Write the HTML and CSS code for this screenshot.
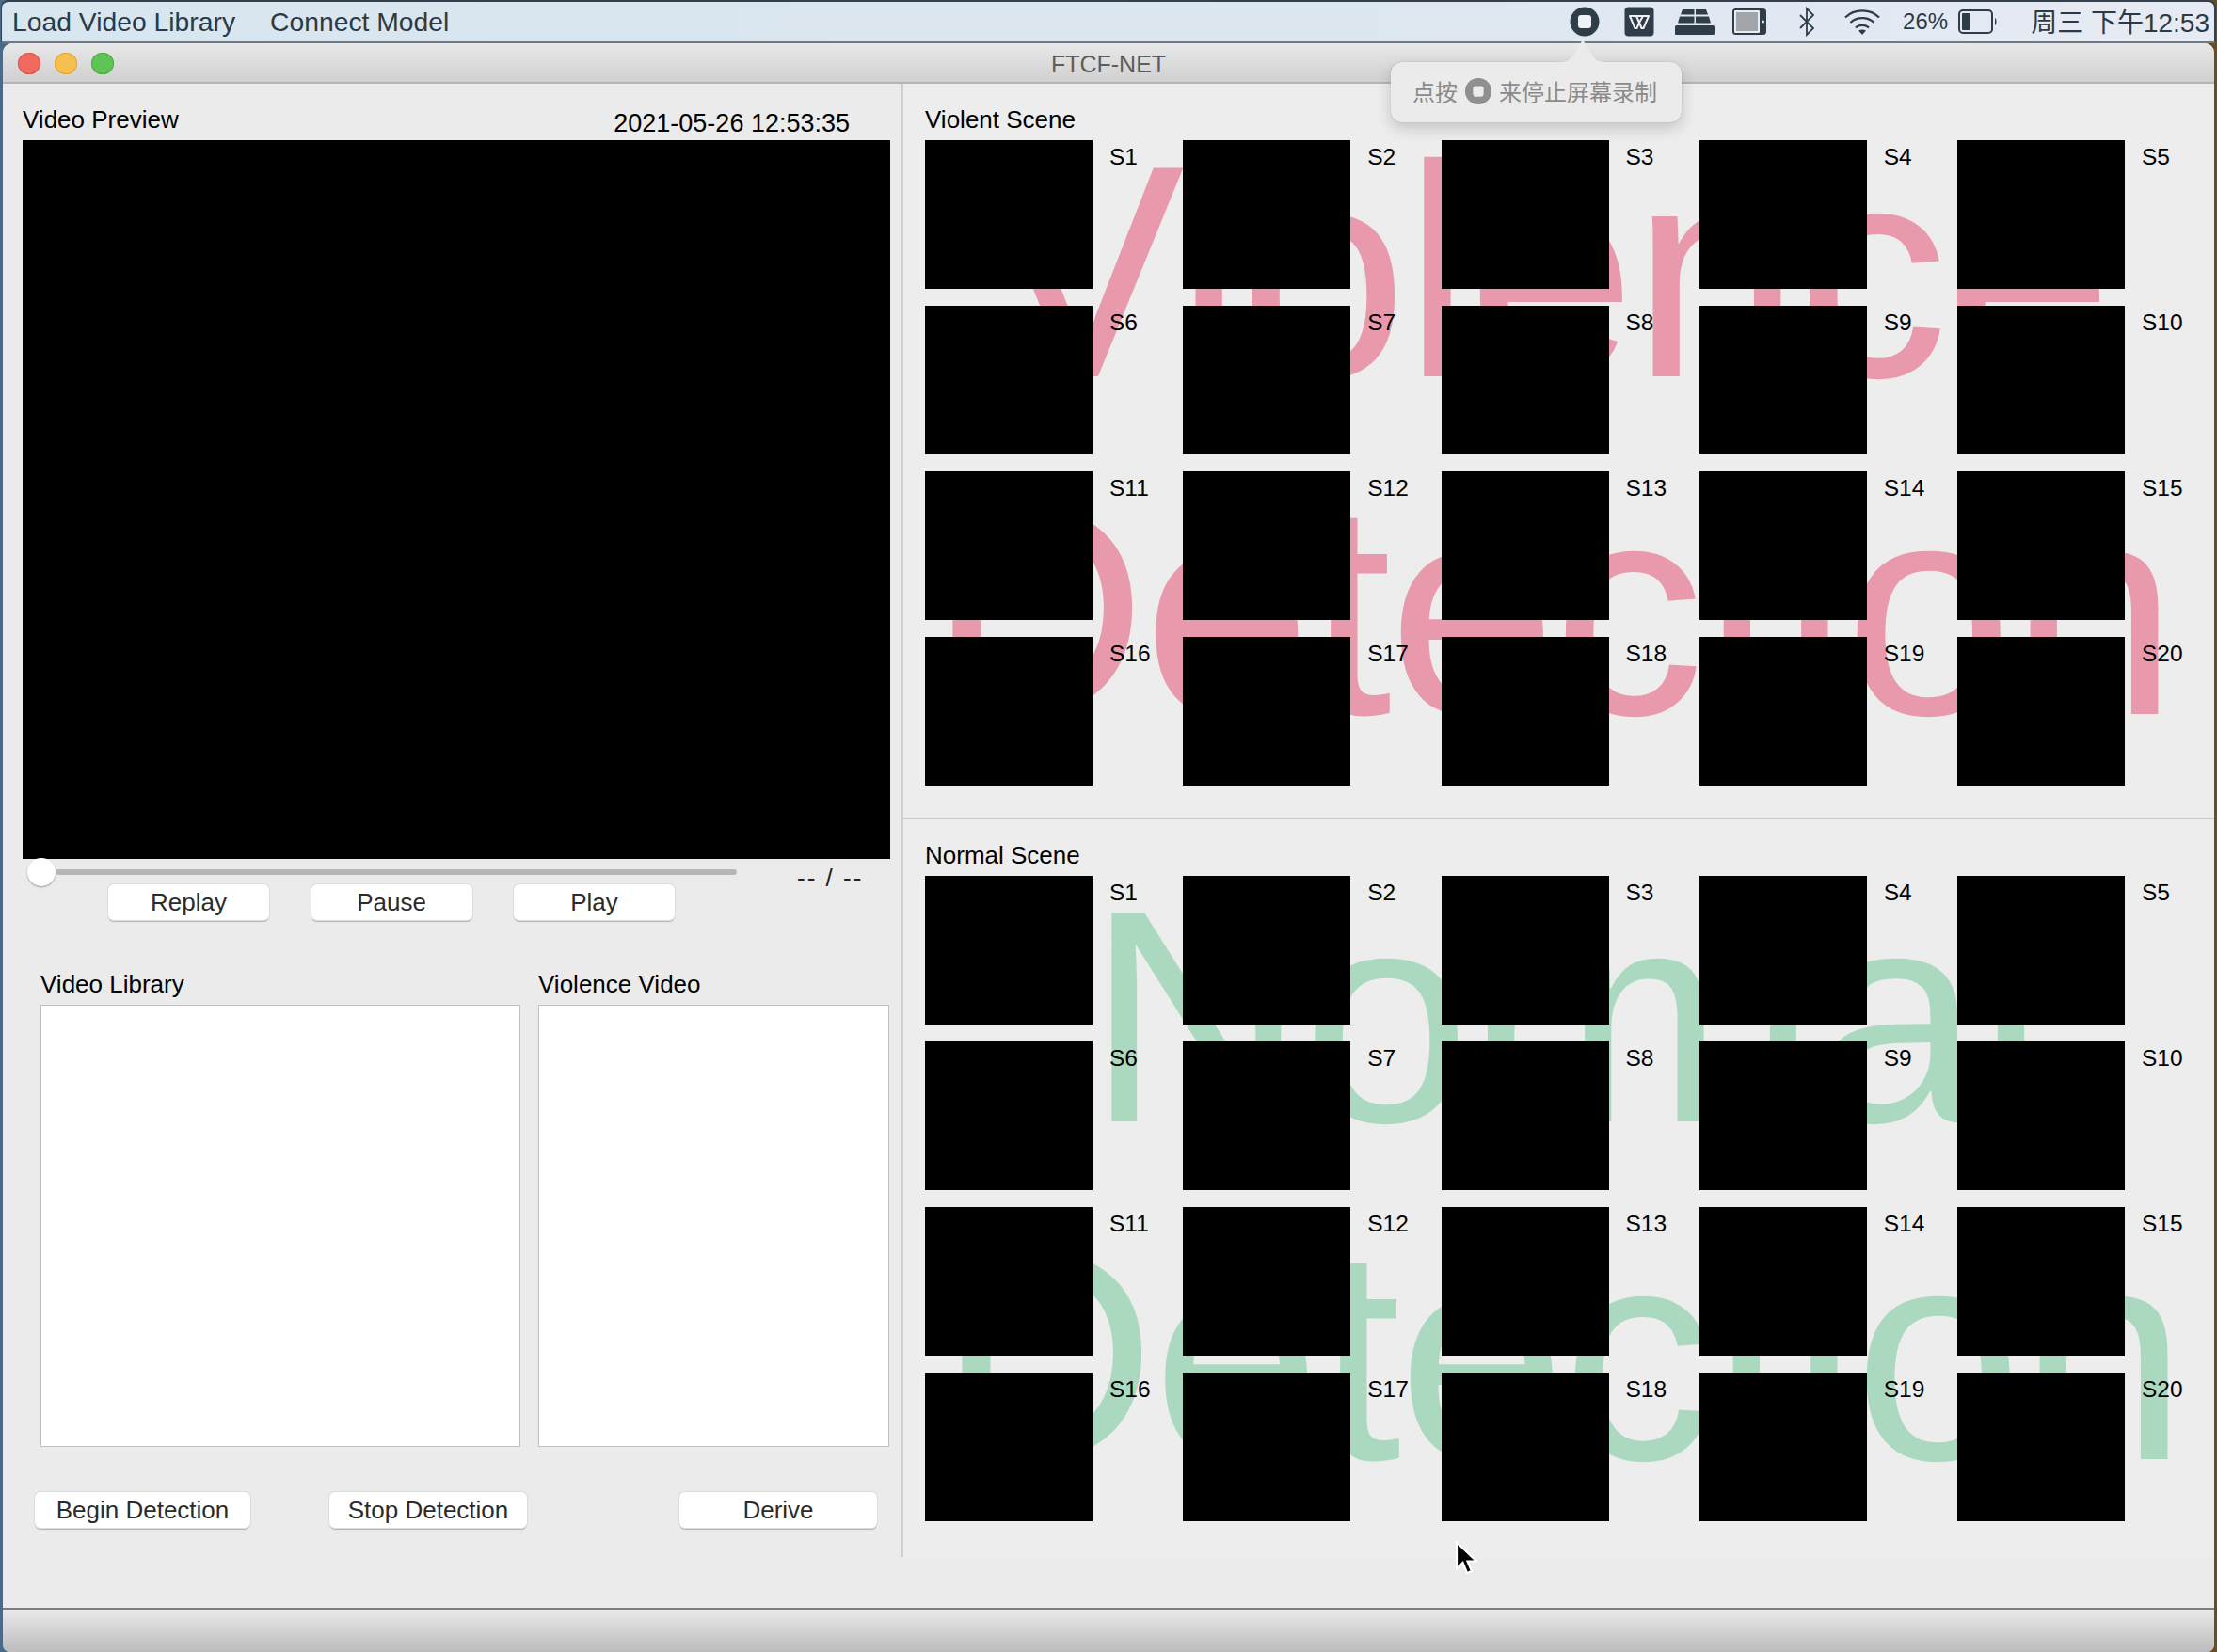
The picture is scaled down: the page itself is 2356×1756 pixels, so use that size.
FILE: index.html
```html
<!DOCTYPE html>
<html lang="en">
<head>
<meta charset="utf-8">
<title>FTCF-NET</title>
<link rel="stylesheet" href="styles.css">
</head>
<body>
<div class="screen">
  <header class="menubar">
    <nav class="menu"><span>Load Video Library</span><span>Connect Model</span></nav>
    <div class="status">
      <svg class="i-rec" viewBox="0 0 32 32"><circle cx="16" cy="16" r="15.500" fill="#2f3d49"/><rect x="9" y="9" width="14" height="14" rx="3" fill="#eef2f6"/></svg>
      <svg class="i-wps" viewBox="0 0 32 32"><rect x=".5" y=".5" width="31" height="31" rx="4" fill="#2f3d49"/><path d="M6 10h20l-5.500 13h-2L16 17l-2.500 6h-2z" fill="none" stroke="#eef2f6" stroke-width="2" stroke-linejoin="round"/><path d="M13 10l3 7 4-7" fill="none" stroke="#eef2f6" stroke-width="2"/></svg>
      <svg class="i-grid" viewBox="0 0 42 28"><path d="M8 1h12.500v5.500H6zM22 1h11l2 5.500H22zM5 8.500h15.500V15.500H3zM22 8.500h14l2 7H22zM1.500 18h39q1.500 0 1.500 1.500V27q0 1-1 1H1q-1 0-1-1v-7.500Q0 18 1.500 18z" fill="#2f3d49"/></svg>
      <svg class="i-pad" viewBox="0 0 36 28"><rect width="36" height="28" rx="3.500" fill="#2f3d49"/><rect x="2" y="2" width="27" height="24" rx="1" fill="#e9edf3"/><rect x="4" y="4" width="23" height="20" fill="#a2a5aa"/><circle cx="32.500" cy="14" r="1.500" fill="#eef2f6"/></svg>
      <svg class="i-bt" viewBox="0 0 18 32"><path d="M2 9l14 14-7 7V2l7 7L2 23" fill="none" stroke="#2f3d49" stroke-width="1.800"/></svg>
      <svg class="i-wifi" viewBox="0 0 40 28"><path d="M2 9.500C11.500 0 28.500 0 38 9.500M7.500 15C14 8.500 26 8.500 32.500 15M13 20.500c3.500-3.500 10.500-3.500 14 0" fill="none" stroke="#2f3d49" stroke-width="2.400"/><path d="M20 28l-4-4.500c2.200-1.400 5.800-1.400 8 0z" fill="#2f3d49"/></svg>
      <span class="pct">26%</span>
      <svg class="i-bat" viewBox="0 0 42 26"><rect x="1" y="1" width="35" height="24" rx="4" fill="none" stroke="#2f3d49" stroke-width="2"/><rect x="4" y="4" width="9" height="18" rx="1" fill="#2f3d49"/><path d="M39 9c2 1 2 7 0 8z" fill="#2f3d49"/></svg>
      <span class="clock">周三 下午12:53</span>
    </div>
  </header>

  <main class="window">
    <div class="titlebar">
      <div class="lights"><i class="light red"></i><i class="light yellow"></i><i class="light green"></i></div>
      <span class="wintitle">FTCF-NET</span>
    </div>

    <div class="body">
      <section class="left">
        <div class="preview-head"><span>Video Preview</span><span class="stamp">2021-05-26 12:53:35</span></div>
        <div class="video"></div>
        <div class="controls">
          <div class="transport">
            <div class="slider"><i class="thumb"></i></div>
            <div class="btn-row">
              <button class="btn b-replay">Replay</button>
              <button class="btn b-pause">Pause</button>
              <button class="btn b-play">Play</button>
            </div>
          </div>
          <span class="time">-- / --</span>
        </div>
        <div class="lists">
          <div class="list-col lib"><span class="list-label">Video Library</span><div class="listbox"></div></div>
          <div class="list-col vio"><span class="list-label">Violence Video</span><div class="listbox"></div></div>
        </div>
        <div class="actions">
          <button class="btn b-begin">Begin Detection</button>
          <button class="btn b-stop">Stop Detection</button>
          <button class="btn b-derive">Derive</button>
        </div>
      </section>

      <section class="right">
        <div class="scene violent">
          <div class="wm wm-v"><span class="wm1">Violence</span><span class="wm2">Detection</span></div>
          <h2 class="scene-title">Violent Scene</h2>
          <div class="grid" id="g1"></div>
        </div>
        <div class="scene normal">
          <div class="wm wm-n"><span class="wm1">Normal</span><span class="wm2">Detection</span></div>
          <h2 class="scene-title">Normal Scene</h2>
          <div class="grid" id="g2"></div>
        </div>
      </section>
    </div>

    <div class="statusbar"></div>
  </main>

  <div class="tip">
    <svg class="tip-arrow" viewBox="0 0 50 24"><path d="M0 24c8 0 12-2 16-9L25 0l9 15c4 7 8 9 16 9z" fill="#ebebeb"/></svg>
    <span>点按</span>
    <svg class="tip-rec" viewBox="0 0 32 32"><circle cx="16" cy="16" r="15" fill="#8f8f8f"/><rect x="10" y="10" width="12" height="12" rx="3" fill="#ebebeb"/></svg>
    <span>来停止屏幕录制</span>
  </div>

  <svg class="cursor" viewBox="0 0 24 36"><path d="M2 1.500v28l6.500-6.500 4.500 11 5-2-4.500-10.500H23z" fill="#000" stroke="#fff" stroke-width="2.200"/></svg>
</div>
<script src="app.js"></script>
</body>
</html>
```

FILE: styles.css
```css
* { box-sizing: border-box; }
html, body { margin: 0; padding: 0; background: #2a3038; }
body { font-family: "Liberation Sans", "Noto Sans CJK SC", sans-serif; color: #000; }

.screen { position: relative; width: 2356px; height: 1756px; overflow: hidden; display: flex; flex-direction: column; background: linear-gradient(90deg, #4a6a8a 0, #3a3c40 50%, #6a4c20 100%); }

.menubar {
  height: 46px; flex: none; display: flex; justify-content: space-between; align-items: center;
  background: linear-gradient(90deg, #d8e6ef 0%, #dde7f0 60%, #e6eaf3 100%);
  border-top: 2px solid #33414f; border-left: 1px solid #33414f; border-right: 2px solid #33414f; border-bottom: 2px solid #6c7a88; border-radius: 8px 8px 0 0;
  margin: 0 1px; color: #2c3a46; padding: 0 5px 0 11px;
}
.menu { display: flex; gap: 37px; font-size: 28.300px; }
.status { display: flex; align-items: center; height: 100%; font-size: 26px; }
.status svg { flex: none; display: block; }
.i-rec { width: 32px; height: 32px; margin-left: 0; }
.i-wps { width: 32px; height: 32px; margin-left: 26px; }
.i-grid { width: 42px; height: 28px; margin-left: 22px; }
.i-pad { width: 36px; height: 28px; margin-left: 19px; }
.i-bt { width: 18px; height: 32px; margin-left: 34px; }
.i-wifi { width: 40px; height: 28px; margin-left: 30px; }
.pct { margin-left: 23px; font-size: 24px; }
.i-bat { width: 42px; height: 26px; margin-left: 11px; }
.clock { margin-left: 35px; font-size: 28px; white-space: nowrap; padding-bottom: 2px; }

.window { flex: 1; min-height: 0; display: flex; flex-direction: column; margin: 0 3px; background: #ebebeb; border-radius: 10px 10px 8px 8px; overflow: hidden; }

.titlebar {
  position: relative; height: 43px; flex: none; display: flex; align-items: center; justify-content: center; padding-top: 3px;
  background: linear-gradient(180deg, #e8e8e8, #d0d0d0); border-bottom: 2px solid #b5b5b5;
}
.lights { position: absolute; left: 16px; top: 10px; display: flex; gap: 15px; }
.light { width: 24px; height: 23px; border-radius: 50%; display: block; }
.red { background: #ef6b5f; box-shadow: inset 0 0 0 1px #d9574c; }
.yellow { background: #f6bf4f; box-shadow: inset 0 0 0 1px #dda63c; }
.green { background: #5fc455; box-shadow: inset 0 0 0 1px #4bab42; }
.wintitle { font-size: 25px; color: #5d5d5d; }

.body { flex: 1; min-height: 0; display: flex; align-items: flex-start; }

.left { width: 955px; flex: none; padding: 22px 0 0 21px; }
.preview-head { display: flex; justify-content: space-between; height: 38px; font-size: 26px; line-height: 32px; padding-right: 55px; }
.stamp { position: relative; top: 4px; font-size: 27px; }
.video { width: 922px; height: 764px; background: #000; }

.controls { display: flex; height: 117px; }
.transport { width: 759px; position: relative; }
.slider { position: relative; height: 6px; margin: 11px 0 0 35px; background: #b7b7b7; border-radius: 3px; }
.thumb { position: absolute; left: -30px; top: -12px; width: 30px; height: 30px; border-radius: 50%; background: #fff; box-shadow: 0 1px 2px rgba(0,0,0,.35); display: block; }
.btn-row { display: flex; gap: 44.500px; margin: 10px 0 0 91px; }
.btn {
  height: 38px; padding: 0; border: 0; border-radius: 6px; background: #fff; font: 26px "Liberation Sans", sans-serif; color: #2b2b2b;
  box-shadow: 0 0 0 1px #dcdcdc, 0 2px 1px #b3b3b3; display: block;
}
.b-replay, .b-pause, .b-play { width: 171px; }
.time { margin: 4px 0 0 64px; font-size: 26px; line-height: 32px; color: #222; white-space: nowrap; letter-spacing: 2px; }

.lists { display: flex; gap: 19px; padding-left: 19px; }
.list-col { display: flex; flex-direction: column; }
.lib { width: 510px; }
.vio { width: 373px; }
.list-label { font-size: 26px; line-height: 32px; height: 38px; display: block; }
.listbox { height: 470px; background: #fff; border: 1px solid #c0c0c0; }

.actions { display: flex; padding: 48px 0 0 13px; }
.b-begin { width: 229px; }
.b-stop { width: 210px; margin-left: 84px; }
.b-derive { width: 210px; margin-left: 162px; }

.right { flex: 1; min-width: 0; height: 1566px; border-left: 2px solid #cfcfcf; background: #ededed; }
.scene { position: relative; overflow: hidden; padding-left: 23px; }
.violent { height: 782px; border-bottom: 2px solid #cdcdcd; padding-top: 22px; }
.normal { padding-top: 22px; height: 760px; }
.scene-title { font-size: 26px; font-weight: 400; margin: 0; line-height: 32px; position: relative; }
.violent .scene-title { height: 38px; }
.normal .scene-title { height: 38px; }

.grid { position: relative; display: grid; grid-template-columns: repeat(5, 274.250px); grid-auto-rows: 158px; row-gap: 18px; }
.cell { display: flex; gap: 18px; }
.thumb-box { width: 178px; height: 158px; background: #000; flex: none; }
.cell-label { font-size: 24.500px; line-height: 26px; padding-top: 5px; }

.wm { position: absolute; left: 0; top: 0; width: 100%; height: 100%; font-size: 322px; line-height: 1; letter-spacing: -4px; white-space: nowrap; }
.wm span { position: absolute; display: block; }
.wm-v { color: #e899ab; }
.wm-n { color: #abd9c0; }
.wm-v .wm1 { left: 84px; top: 39px; }
.wm-v .wm2 { left: 26px; top: 398px; }
.wm-n .wm1 { left: 195px; top: 49px; }
.wm-n .wm2 { left: 36px; top: 408px; }

.statusbar { flex: none; margin-top: auto; height: 47px; background: linear-gradient(180deg, #e9e9e9, #bcbcbc); border-top: 2px solid #7d7d7d; }

.tip {
  position: absolute; left: 1478px; top: 66px; width: 309px; height: 64px; display: flex; align-items: center; justify-content: center; gap: 7px; padding: 0 3px 3px 0;
  background: #ebebeb; border-radius: 12px; box-shadow: 0 6px 16px rgba(0,0,0,.18), 0 0 1px rgba(0,0,0,.3); color: #8a8a8a; font-size: 24px;
}
.tip-arrow { position: absolute; left: 179px; top: -24px; width: 50px; height: 24px; display: block; }
.tip-rec { width: 30px; height: 30px; display: block; }

.cursor { position: absolute; left: 1546px; top: 1638px; width: 24px; height: 36px; display: block; }
```

FILE: app.js
```js
for (const id of ["g1", "g2"]) {
  const grid = document.getElementById(id);
  for (let n = 1; n <= 20; n++) {
    const cell = document.createElement("div");
    cell.className = "cell";
    const box = document.createElement("div");
    box.className = "thumb-box";
    const label = document.createElement("span");
    label.className = "cell-label";
    label.textContent = "S" + n;
    cell.append(box, label);
    grid.append(cell);
  }
}
```
